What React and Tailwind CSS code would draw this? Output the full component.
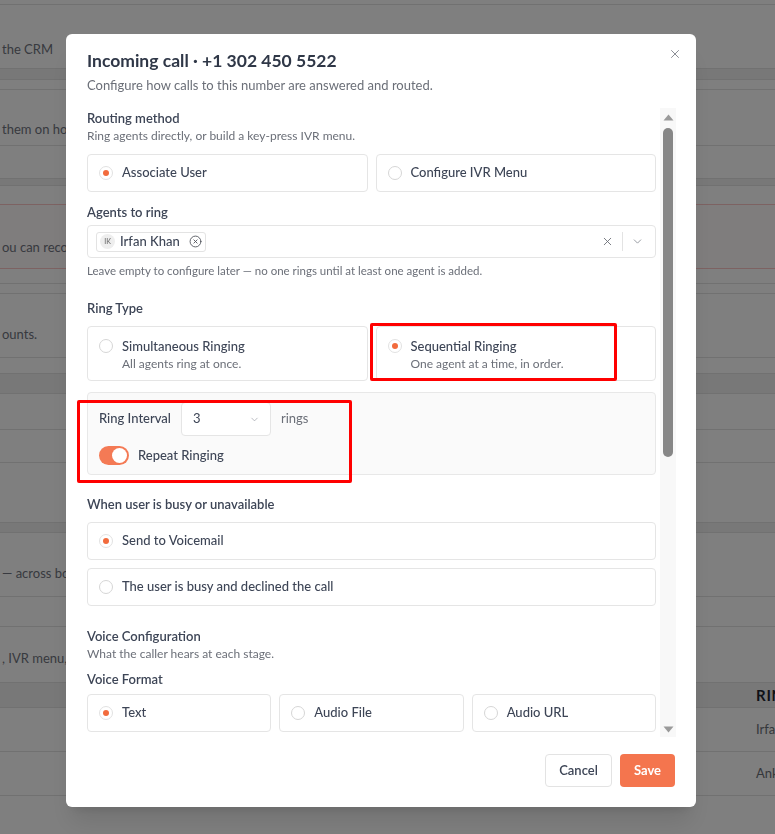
import { X, ChevronDown, CircleX } from "lucide-react";

const font = { fontFamily: "Lato, 'Noto Sans', sans-serif" };

// rows of the page behind the dialog (heights include the 1px bottom border)
const bgRows = [
  { h: "h-[5px]" },
  { h: "h-[64px]", left: "the CRM", pt: "pt-[35px]" },
  { h: "h-[11px]", band: true },
  { h: "h-[10px]" },
  { h: "h-[56px]", left: "them on hold while you transfer", pt: "pt-[30px]" },
  { h: "h-[33px]" },
  { h: "h-[7px]", band: true },
  { h: "h-[19px]", red: true },
  { h: "h-[64px]", left: "ou can reconnect the number at any time", pt: "pt-[33px]", red: true, pink: true },
  { h: "h-[15px]" },
  { h: "h-[10px]" },
  { h: "h-[64px]", left: "ounts.", pt: "pt-[31px]" },
  { h: "h-[16px]" },
  { h: "h-[20px]", band: true },
  { h: "h-[36px]" },
  { h: "h-[33px]" },
  { h: "h-[60px]" },
  { h: "h-[10px]", band: true },
  { h: "h-[64px]", left: "— across both numbers and agents", pt: "pt-[31px]" },
  { h: "h-[30px]" },
  { h: "h-[56px]", left: ", IVR menu, and voicemail", pt: "pt-[22px]" },
  { h: "h-[25px]", band: true, right: "RING", bold: true },
  { h: "h-[44px]", right: "Irfan" },
  { h: "h-[44px]", right: "Ankit" },
];

function Radio({ checked }) {
  return (
    <span
      className={`flex h-[14px] w-[14px] shrink-0 items-center justify-center rounded-full border bg-white ${
        checked ? "border-[#e2e2e2]" : "border-[#d6d6d6]"
      }`}
    >
      {checked && <span className="h-[6px] w-[6px] rounded-full bg-[#f26b3d]" />}
    </span>
  );
}

function Option({ label, checked, className = "" }) {
  return (
    <div className={`flex h-[38px] items-center gap-[9px] rounded-[4px] border border-[#e5e5e5] bg-white pl-[11px] ${className}`}>
      <Radio checked={checked} />
      <span className="text-[13px] font-medium text-[#3d4556]">{label}</span>
    </div>
  );
}

function RingOption({ title, desc, checked }) {
  return (
    <div className="flex flex-1 gap-[9px] rounded-[4px] border border-[#e5e5e5] bg-white pb-[8px] pl-[11px] pt-[10px]">
      <span className="mt-[2px]">
        <Radio checked={checked} />
      </span>
      <div>
        <div className="text-[13px] font-medium leading-[18px] text-[#3d4556]">{title}</div>
        <div className="text-[12px] leading-[17px] text-[#6b6f78]">{desc}</div>
      </div>
    </div>
  );
}

function Label({ children, className = "" }) {
  return <div className={`text-[13px] font-semibold leading-[18px] text-[#3d4556] ${className}`}>{children}</div>;
}

function Hint({ children }) {
  return <div className="text-[12px] leading-[17px] text-[#6b6f78]">{children}</div>;
}

function TextBox({ text }) {
  return (
    <div className="mt-[5px] h-[84px] rounded-[4px] border border-[#e5e5e5] px-[11px] py-[9px] text-[13px] text-[#9a9ea6]">
      {text}
    </div>
  );
}

// drawn scrollbar (classic style: arrows + rounded thumb)
function ScrollBar() {
  return (
    <div className="ml-[4px] flex w-[16px] shrink-0 flex-col items-center bg-[#f8f8f8]">
      <svg width="11" height="7" viewBox="0 0 11 7" className="mt-[6px]">
        <path d="M5.5 0.5 L10.5 6.5 L0.5 6.5 Z" fill="#9a9a9a" />
      </svg>
      <div className="mt-[7px] h-[329px] w-[10px] rounded-full bg-[#878787]" />
      <div className="flex-1" />
      <svg width="11" height="7" viewBox="0 0 11 7" className="mb-[4px]">
        <path d="M0.5 0.5 L10.5 0.5 L5.5 6.5 Z" fill="#9a9a9a" />
      </svg>
    </div>
  );
}

export default function App() {
  return (
    <div className="relative h-screen w-screen overflow-hidden bg-white" style={font}>
      {/* page behind */}
      <div className="flex flex-col">
        {bgRows.map((r, i) => (
          <div
            key={i}
            className={`flex shrink-0 border-b ${r.h} ${r.red ? "border-[#fbc4c4]" : "border-[#e3e3e3]"} ${
              r.band ? "bg-[#f1f1f1]" : ""
            } ${r.pink ? "bg-[#fffafa]" : ""}`}
          >
            <div className={`w-[756px] shrink-0 overflow-hidden whitespace-nowrap pl-[2px] text-[13px] text-[#707480] ${r.pt || ""}`}>
              {r.left}
            </div>
            {r.right && (
              <div
                className={`flex items-center whitespace-nowrap ${
                  r.bold ? "text-[15px] font-bold tracking-wider text-[#1f2430]" : "text-[13px] text-[#6b6f78]"
                }`}
              >
                {r.right}
              </div>
            )}
          </div>
        ))}
      </div>

      {/* overlay */}
      <div className="fixed inset-0 bg-black/50" />

      {/* dialog */}
      <div className="fixed inset-0 pl-[66px] pt-[34px]">
        <div className="relative flex h-[773px] w-[630px] flex-col rounded-[6px] bg-white pl-[21px] pr-[20px] shadow-xl">
          <button className="absolute right-[14px] top-[13px] text-[#7a7e86]">
            <X size={14} strokeWidth={1.5} />
          </button>

          <div className="pt-[15px] text-[17.5px] font-bold leading-[24px] text-[#2f3747]">
            Incoming call · +1 302 450 5522
          </div>
          <div className="mt-[3px] text-[13px] leading-[18px] text-[#6b6f78]">
            Configure how calls to this number are answered and routed.
          </div>

          <div className="mt-[14px] flex h-[629px]">
            <div className="min-w-0 flex-1 overflow-hidden">
              <Label className="pt-[1px]">Routing method</Label>
              <Hint>Ring agents directly, or build a key-press IVR menu.</Hint>
              <div className="mt-[10px] flex gap-2">
                <Option className="flex-1" label="Associate User" checked />
                <Option className="flex-1" label="Configure IVR Menu" />
              </div>

              <Label className="mt-[11px] font-medium">Agents to ring</Label>
              <div className="mt-[4px] flex h-[33px] items-center rounded-[4px] border border-[#e5e5e5] pl-[8px]">
                <div className="flex h-[20px] items-center gap-[5px] rounded-[3px] border border-[#e3e3e3] pl-[3px] pr-[3px]">
                  <span className="flex h-[15px] w-[15px] items-center justify-center rounded-full bg-[#eeeeee] text-[7px] font-semibold text-[#777]">
                    IK
                  </span>
                  <span className="text-[13px] font-medium text-[#3d4556]">Irfan Khan</span>
                  <CircleX size={13} strokeWidth={1.6} className="ml-[4px] text-[#4a4e56]" />
                </div>
                <div className="flex-1" />
                <X size={13} strokeWidth={1.6} className="text-[#666a72]" />
                <span className="mx-[8px] h-[19px] w-px bg-[#e3e3e3]" />
                <ChevronDown size={13} strokeWidth={1.6} className="mr-[11px] text-[#8a8e96]" />
              </div>
              <div className="mt-[5px] text-[11.5px] leading-[16px] text-[#6b6f78]">
                Leave empty to configure later — no one rings until at least one agent is added.
              </div>

              <Label className="mt-[20px] font-medium">Ring Type</Label>
              <div className="mt-[9px] flex gap-2">
                <RingOption title="Simultaneous Ringing" desc="All agents ring at once." />
                <RingOption title="Sequential Ringing" desc="One agent at a time, in order." checked />
              </div>

              <div className="mt-[11px] rounded-[4px] border border-[#e8e8e8] bg-[#fafafa] pb-[8px] pl-[11px] pt-[9px]">
                <div className="flex items-center gap-[10px]">
                  <span className="text-[13px] font-medium text-[#3d4556]">Ring Interval</span>
                  <div className="flex h-[34px] w-[90px] items-center justify-between rounded-[4px] border border-[#e5e5e5] bg-white pl-[11px] pr-[10px]">
                    <span className="text-[13px] text-[#3d4556]">3</span>
                    <ChevronDown size={11} strokeWidth={1.5} className="text-[#9a9ea6]" />
                  </div>
                  <span className="text-[13px] text-[#6b6f78]">rings</span>
                </div>
                <div className="mt-[10px] flex items-center gap-[9px]">
                  <span className="flex h-[19px] w-[30px] items-center justify-end rounded-full bg-[#f47a55] pr-[2px]">
                    <span className="h-[15px] w-[15px] rounded-full bg-white" />
                  </span>
                  <span className="text-[13px] font-medium text-[#3d4556]">Repeat Ringing</span>
                </div>
              </div>

              <Label className="mt-[20px] font-medium">When user is busy or unavailable</Label>
              <Option className="mt-[9px]" label="Send to Voicemail" checked />
              <Option className="mt-[8px]" label="The user is busy and declined the call" />

              <Label className="mt-[21px]">Voice Configuration</Label>
              <Hint>What the caller hears at each stage.</Hint>
              <Label className="mt-[8px] font-medium">Voice Format</Label>
              <div className="mt-[6px] flex gap-2">
                <Option className="flex-1" label="Text" checked />
                <Option className="flex-1" label="Audio File" />
                <Option className="flex-1" label="Audio URL" />
              </div>

              <Label className="mt-[16px] font-medium">Welcome Message</Label>
              <TextBox text="Thanks for calling. Please hold while we connect you." />
            </div>
            <ScrollBar />
          </div>

          <div className="mt-[17px] flex justify-end gap-2 pr-px">
            <button className="h-[33px] w-[67px] rounded-[4px] border border-[#e3e3e3] bg-white text-[13px] font-semibold text-[#3d4556]">
              Cancel
            </button>
            <button className="h-[33px] w-[55px] rounded-[4px] bg-[#f4754e] text-[13px] font-bold text-white">
              Save
            </button>
          </div>

          {/* red annotation boxes */}
          <div className="pointer-events-none absolute left-[304px] top-[289px] h-[58px] w-[247px] rounded-[2px] border-[3px] border-[#ff0000]" />
          <div className="pointer-events-none absolute left-[11px] top-[366px] h-[83px] w-[275px] rounded-[2px] border-[3px] border-[#ff0000]" />
        </div>
      </div>
    </div>
  );
}
